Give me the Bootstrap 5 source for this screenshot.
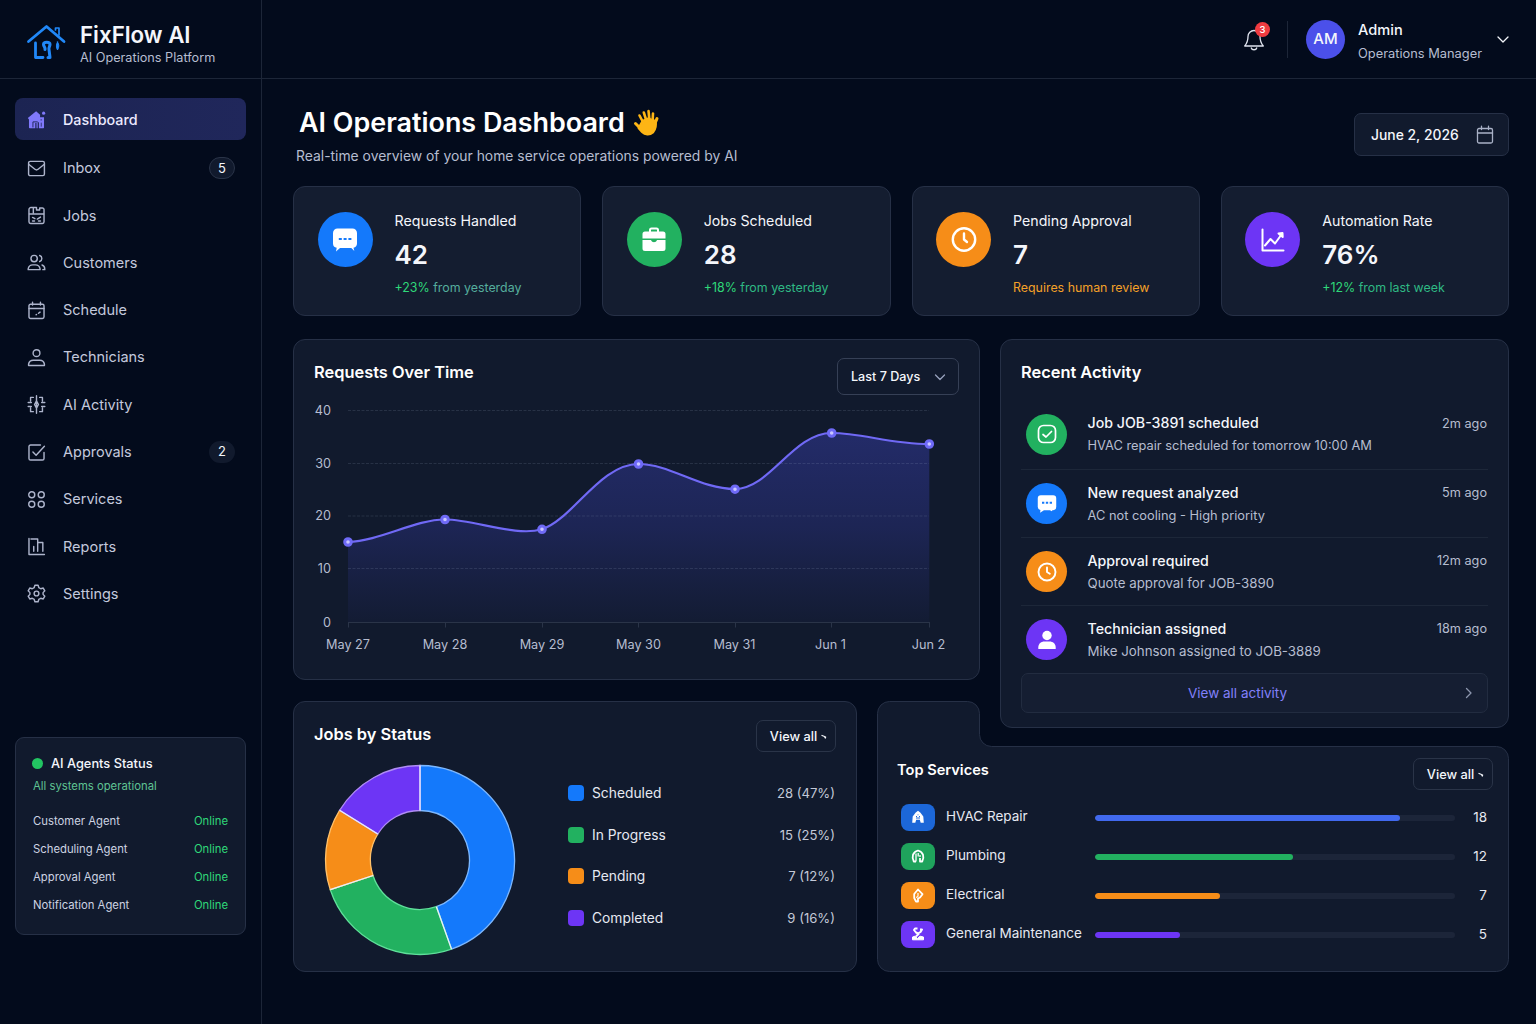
<!DOCTYPE html>
<html lang="en" data-bs-theme="dark">
  <head>
    <meta charset="UTF-8" />
    <meta name="viewport" content="width=device-width, initial-scale=1.0" />
    <title>FixFlow AI - Operations Dashboard</title>
    <link
      rel="stylesheet"
      href="https://cdn.jsdelivr.net/npm/bootstrap@5.3.0/dist/css/bootstrap.min.css"
    />
    <style>
      :root {
        --ff-bg: #030b1c;
        --ff-card: #111a2d;
        --ff-line: #263046;
        --ff-text: #f4f6fb;
        --ff-muted: #b6bdd0;
        --ff-blue: #1479fb;
        --ff-green: #22b160;
        --ff-orange: #f68d18;
        --ff-purple: #6d35f5;
      }
      body {
        background: var(--ff-bg);
        color: var(--ff-text);
        font-family: Inter, "Liberation Sans", sans-serif;
        font-size: 14px;
        line-height: 20px;
        overflow: hidden;
      }
      svg {
        display: block;
        flex-shrink: 0;
      }
      .line-icon {
        fill: none;
        stroke: currentColor;
        stroke-width: 1.8;
        stroke-linecap: round;
        stroke-linejoin: round;
      }
      .line-icon.thin {
        stroke-width: 1.3;
      }

      /* Sidebar */
      .sidebar {
        width: 262px;
        border-right: 1px solid #1d2638;
        padding-bottom: 89px;
      }
      .brand {
        height: 79px;
        border-bottom: 1px solid #1d2638;
        padding: 6px 0 0 26px;
        gap: 14px;
      }
      .brand-text {
        padding-top: 6px;
      }
      .brand-name {
        font-size: 22.3px;
        line-height: 25px;
        font-weight: 600;
      }
      .brand-sub {
        font-size: 12.7px;
        line-height: 21px;
        color: var(--ff-muted);
      }
      .side-nav {
        padding: 19px 15px 0;
        gap: 5.3px;
      }
      .side-nav .nav-link {
        height: 42px;
        padding: 1px 11px 0 12px;
        border-radius: 8px;
        color: #c3c9dc;
        font-size: 14.5px;
        gap: 17px;
      }
      .side-nav .nav-link svg {
        color: #adb4cb;
      }
      .side-nav .nav-link.active {
        background: linear-gradient(90deg, #1c2452, #20275b);
        color: #eceaff;
        font-size: 14.3px;
        font-weight: 500;
        margin-bottom: 1.5px;
      }
      .side-nav .nav-link.active svg {
        color: #8079fb;
      }
      .count-pill {
        width: 26px;
        height: 22px;
        border-radius: 11px;
        background: #111a2d;
        color: #f4f6fb;
        font-size: 13px;
        line-height: 21px;
        text-align: center;
      }
      .count-pill.outlined {
        border: 1px solid #2a3448;
        line-height: 20px;
      }
      .panel {
        background: var(--ff-card);
        border: 1px solid var(--ff-line);
        border-radius: 12px;
      }
      .agents {
        margin: 0 15px;
        height: 198px;
        padding: 16px 17px 0;
        border-radius: 9px;
        font-size: 11.3px;
      }
      .agents-title {
        font-size: 12.8px;
        font-weight: 500;
        gap: 8px;
      }
      .agents-dot {
        width: 11px;
        height: 11px;
        background: #22c562;
        margin: -1px 0 0 -1px;
      }
      .agents-note {
        color: #5fc393;
        margin: 2px 0 12px;
        line-height: 20px;
      }
      .agents li {
        line-height: 27.9px;
        color: #cdd3e2;
      }
      .agents li span:last-child {
        color: #2fd879;
      }

      /* Top bar */
      .topbar {
        height: 79px;
        border-bottom: 1px solid #1d2638;
        padding-right: 26px;
      }
      .bell {
        width: 24px;
        height: 24px;
        margin-right: 21px;
      }
      .bell svg {
        color: #dfe3ee;
      }
      .bell-count {
        position: absolute;
        top: -5px;
        left: 13px;
        width: 15px;
        height: 15px;
        border-radius: 50%;
        background: #f03b40;
        color: #fff;
        font-size: 9.5px;
        font-weight: 500;
        line-height: 15px;
        text-align: center;
      }
      .split-line {
        width: 1px;
        height: 37px;
        background: #1d2638;
        margin-right: 18px;
      }
      .avatar {
        width: 39px;
        height: 39px;
        background: #4b50ea;
        font-size: 15px;
        font-weight: 500;
        margin-right: 13px;
      }
      .who {
        width: 138px;
        line-height: 23px;
        padding-top: 5px;
      }
      .who-name {
        font-size: 14.6px;
        font-weight: 500;
      }
      .who-role {
        font-size: 12.85px;
        color: var(--ff-muted);
      }

      /* Page body */
      .content {
        padding: 0 27px 0 31px;
      }
      .page-head {
        height: 107px;
      }
      .page-title {
        font-size: 26.9px;
        line-height: 32px;
        font-weight: 600;
        margin: 27px 0 0 6px;
        gap: 8px;
      }
      .page-sub {
        margin: 8px 0 0 3px;
        font-size: 13.9px;
        color: var(--ff-muted);
      }
      .date-btn {
        margin-top: 34px;
        width: 155px;
        height: 43px;
        padding: 0 14px 0 16px;
        border-radius: 7px;
        color: var(--ff-text);
        font-size: 13.9px;
        font-weight: 500;
      }
      .date-btn svg {
        color: #a9b1c6;
      }

      .stats {
        display: grid;
        grid-template-columns: repeat(4, 288.25px);
        column-gap: 21px;
        height: 130px;
        margin-bottom: 23px;
      }
      .stat {
        background: #141d30;
        padding: 25px 0 0 23.5px;
        gap: 22px;
      }
      .stat-text {
        margin-top: -1px;
      }
      .round-icon {
        width: 55px;
        height: 55px;
        color: #fff;
        flex-shrink: 0;
      }
      .stat-label {
        font-size: 14.2px;
      }
      .stat-value {
        font-size: 26px;
        line-height: 32px;
        font-weight: 600;
        margin: 8px 0 9px;
      }
      .stat-note {
        font-size: 12.4px;
        line-height: 16px;
        color: #2fb984;
      }
      .stat-note b {
        font-weight: 400;
        color: #2fd879;
      }
      .stat-note.muted-green {
        color: #55ae9d;
      }
      .stat-note.warn {
        color: #f5a128;
      }
      .fill-blue { background: var(--ff-blue); }
      .fill-green { background: var(--ff-green); }
      .fill-orange { background: var(--ff-orange); }
      .fill-purple { background: var(--ff-purple); }

      /* Panels share one grid, Top Services wraps under Recent Activity */
      .board {
        display: grid;
        grid-template-columns: 564px 20px 103px 20px 509px;
        grid-template-rows: 341px 21px 27px 19px 225px;
      }
      .area-chart { grid-area: 1 / 1 / 2 / 4; }
      .area-activity { grid-area: 1 / 5 / 4 / 6; }
      .area-jobs { grid-area: 3 / 1 / 6 / 2; }
      .area-services { grid-area: 3 / 3 / 6 / 6; }
      .panel-title {
        font-size: 16.4px;
        line-height: 20px;
        font-weight: 600;
        margin: 0;
      }
      .ghost-btn {
        border: 1px solid #2a3448;
        border-radius: 7px;
        background: transparent;
        color: var(--ff-text);
        font-size: 12.8px;
        font-weight: 500;
        padding: 0;
      }
      .range-btn {
        width: 122px;
        height: 37px;
        padding: 0 12px 0 13px;
        border-color: #364056;
        font-size: 12.6px;
      }
      .range-btn svg { color: #97a1bc; }
      .view-btn {
        width: 80px;
        height: 32px;
        gap: 4px;
        padding: 1px 0 0 5px;
      }
      .chart-pad { padding: 18px 20px 0; }
      .axis-text {
        fill: #b6bdd0;
        font-size: 12.7px;
      }

      .activity-pad { padding: 22px 20px 0; }
      .feed { margin-top: 19px; }
      .feed li {
        height: 68px;
        padding-left: 5px;
        gap: 20.5px;
        border-bottom: 1px solid #1d2739;
      }
      .feed li:first-child {
        height: 69px;
        padding-bottom: 2px;
      }
      .feed li:last-child {
        height: 67px;
        border-bottom: 0;
      }
      .feed .round-icon {
        width: 41px;
        height: 41px;
      }
      .feed-title {
        font-size: 14.2px;
        font-weight: 500;
        line-height: 23px;
      }
      .feed-text {
        font-size: 12.85px;
        line-height: 23px;
        color: var(--ff-muted);
      }
      .feed-text.wide { font-size: 13.3px; }
      .feed-time {
        font-size: 12.7px;
        line-height: 23px;
        color: var(--ff-muted);
        padding: 11px 1px 0 0;
      }
      .all-btn {
        height: 40px;
        border-color: #222c40;
        background: #151e32;
        color: #8280fa;
        font-size: 13.5px;
        font-weight: 400;
        padding: 0 14px;
      }
      .all-btn span { margin-right: 24px; }
      .all-btn svg { color: #8b95ad; }

      .jobs-pad { padding: 18px 20px 0; }
      .donut { margin: 9px 0 0 7px; }
      .legend {
        width: 267px;
        margin: 20px 1px 0 0;
      }
      .legend li {
        height: 41.7px;
        color: #e6e9f2;
        font-size: 13.8px;
      }
      .legend li span:last-child {
        font-size: 13.1px;
        color: #c3c9d8;
      }
      .swatch {
        width: 16px;
        height: 16px;
        border-radius: 4px;
        margin-right: 8px;
      }

      .services-shape,
      .services-body { grid-area: 1 / 1; }
      .services-body { padding: 57px 16px 0 20px; }
      .services-body .panel-title {
        font-size: 14.6px;
        padding-top: 2px;
      }
      .service-list { padding: 8px 6px 0 4px; }
      .service-list li {
        height: 38.9px;
        font-size: 13.5px;
        color: #e6e9f2;
      }
      .service-chip {
        width: 34px;
        height: 27px;
        border-radius: 8px;
        margin-right: 11px;
        color: #fff;
      }
      .service-chip.hvac { background: #1c67d8; }
      .service-chip.plumbing { background: #1fa35c; }
      .service-name { width: 149px; margin-top: -2px; }
      .service-list .progress {
        width: 360px;
        height: 6px;
        border-radius: 3px;
        background: #1c2539;
        margin-top: 1px;
      }
      .service-list .progress-bar { border-radius: 3px; }
      .progress-bar.hvac { background: #4169ee; }
    </style>
  </head>
  <body>
    <div class="d-flex vh-100">
      <!-- Sidebar -->
      <aside class="sidebar d-flex flex-column flex-shrink-0">
        <div class="brand d-flex align-items-center">
          <svg width="40" height="36" viewBox="0 0 40 36" fill="none" stroke="#2188f8" stroke-width="2.800" stroke-linecap="round" stroke-linejoin="round">
            <path d="M2.500 17.500 20.500 2.500 38 17.500" />
            <path d="M29.500 6V4h3.500v7" stroke-width="1.700" />
            <path d="M9.500 19v14.500h7.500" />
            <path d="M17.500 20.500c0-3 6.500-3 6.500 0 0 2-1.500 2.500-1 5l1 8h-2M17.500 20.500c0 2 2 2.500 1.500 5" stroke-width="3" />
            <path d="M31.500 18c1.800 2 1.800 5 0 8-1.500-2.500-1.500-5.500 0-8z" fill="#2188f8" stroke-width="1" />
          </svg>
          <div class="brand-text">
            <div class="brand-name">FixFlow AI</div>
            <div class="brand-sub">AI Operations Platform</div>
          </div>
        </div>

        <nav class="side-nav nav flex-column">
          <a class="nav-link active d-flex align-items-center" href="#">
            <svg width="19" height="19" viewBox="0 0 24 24" fill="currentColor">
              <path d="M1 10 11.500 1.500l5 4.500V9h5v13a1 1 0 0 1-1 1H15v-7.500h-1.500V23H12v-6.500h-1.500V23H3.500a1 1 0 0 1-1-1V12z" />
              <path d="M7.500 22v-7h6" stroke="#20275b" stroke-width="1.200" fill="none" />
              <path d="M17 12.500h2M18 16v5" stroke="#20275b" stroke-width="1" />
              <circle cx="21" cy="4" r="2" />
            </svg>
            <span>Dashboard</span>
          </a>
          <a class="nav-link d-flex align-items-center" href="#">
            <svg class="line-icon" width="19" height="19" viewBox="0 0 24 24">
              <rect x="2" y="3" width="20" height="18" rx="2" />
              <path d="m2.500 7 7.500 6c1.300 1 2.700 1 4 0l7.500-6" />
            </svg>
            <span>Inbox</span>
            <span class="count-pill outlined ms-auto">5</span>
          </a>
          <a class="nav-link d-flex align-items-center" href="#">
            <svg class="line-icon" width="19" height="19" viewBox="0 0 24 24">
              <path d="M8 9V2H5a2.500 2.500 0 0 0-2.500 2.500v15.500a2 2 0 0 0 2 2h15a2 2 0 0 0 2-2V4.500A2 2 0 0 0 19.500 2.500H16V5h-4V2H8" />
              <path d="M3 10h18M7 14.500l3 1.500M17 14l-4 2.500M7 19h2.500M14.500 19H17" />
            </svg>
            <span>Jobs</span>
          </a>
          <a class="nav-link d-flex align-items-center" href="#">
            <svg class="line-icon" width="19" height="19" viewBox="0 0 24 24">
              <circle cx="9" cy="7" r="4" />
              <path d="M1.500 21v-1a6 6 0 0 1 6-5h3a6 6 0 0 1 6 5v1zM16 3.200a4 4 0 0 1 0 7.600M19 15.200c2.200.7 3.500 2.600 3.500 5.800H20" />
            </svg>
            <span>Customers</span>
          </a>
          <a class="nav-link d-flex align-items-center" href="#">
            <svg class="line-icon" width="19" height="19" viewBox="0 0 24 24">
              <rect x="2.500" y="4" width="19" height="18" rx="2" />
              <path d="M2.500 9.500h19M7 1.500V5M17 1.500V5M16.500 14l-2 1.500M12 17l-.5.500" />
            </svg>
            <span>Schedule</span>
          </a>
          <a class="nav-link d-flex align-items-center" href="#">
            <svg class="line-icon" width="19" height="19" viewBox="0 0 24 24">
              <circle cx="12" cy="6.500" r="4.300" />
              <path d="M2 22v-1.500A6 6 0 0 1 8 15.500h8a6 6 0 0 1 6 5V22z" />
            </svg>
            <span>Technicians</span>
          </a>
          <a class="nav-link d-flex align-items-center" href="#">
            <svg class="line-icon" width="19" height="19" viewBox="0 0 24 24">
              <path d="M12 1v22M12 7.500 9.500 12l2.500 4.500 2.500-4.500zM8 3H4.500v4.500M16 3h3.500v4.500M1.500 9.500h4M22.500 9.500h-4M1.500 14.500h4M22.500 14.500h-4M4.500 16.500V21H8M19.500 16.500V21H16" />
            </svg>
            <span>AI Activity</span>
          </a>
          <a class="nav-link d-flex align-items-center" href="#">
            <svg class="line-icon" width="19" height="19" viewBox="0 0 24 24">
              <path d="M17 2.500H4.500a2 2 0 0 0-2 2v15a2 2 0 0 0 2 2h15a2 2 0 0 0 2-2V12" />
              <path d="m7.500 11.500 4 4L22 4" />
            </svg>
            <span>Approvals</span>
            <span class="count-pill ms-auto">2</span>
          </a>
          <a class="nav-link d-flex align-items-center" href="#">
            <svg class="line-icon" width="19" height="19" viewBox="0 0 24 24">
              <circle cx="6" cy="6" r="3.800" />
              <circle cx="18" cy="6" r="3.800" />
              <circle cx="6" cy="18" r="3.800" />
              <circle cx="18" cy="18" r="3.800" />
            </svg>
            <span>Services</span>
          </a>
          <a class="nav-link d-flex align-items-center" href="#">
            <svg class="line-icon" width="19" height="19" viewBox="0 0 24 24">
              <path d="M2.500 2v20H22M5 2.500h8.500v15.500M8.500 12v6M13.500 7h6.500v11" />
            </svg>
            <span>Reports</span>
          </a>
          <a class="nav-link d-flex align-items-center" href="#">
            <svg class="line-icon" width="19" height="19" viewBox="0 0 24 24">
              <circle cx="12" cy="12" r="3" />
              <path d="M10 1.500h4l.9 3 2.500 1.500 3.100-.9 2 3.500-2.200 2.300v2.200l2.200 2.300-2 3.500-3.100-.9-2.500 1.500-.9 3h-4l-.9-3-2.500-1.500-3.100.9-2-3.500 2.200-2.300v-2.200L1.500 8.600l2-3.500 3.100.9 2.500-1.500z" />
            </svg>
            <span>Settings</span>
          </a>
        </nav>

        <div class="agents panel mt-auto">
          <div class="agents-title d-flex align-items-center">
            <span class="agents-dot rounded-circle"></span>AI Agents Status
          </div>
          <div class="agents-note">All systems operational</div>
          <ul class="list-unstyled mb-0">
            <li class="d-flex justify-content-between"><span>Customer Agent</span><span>Online</span></li>
            <li class="d-flex justify-content-between"><span>Scheduling Agent</span><span>Online</span></li>
            <li class="d-flex justify-content-between"><span>Approval Agent</span><span>Online</span></li>
            <li class="d-flex justify-content-between"><span>Notification Agent</span><span>Online</span></li>
          </ul>
        </div>
      </aside>

      <div class="flex-grow-1">
        <!-- Top bar -->
        <header class="topbar d-flex align-items-center justify-content-end">
          <div class="bell position-relative">
            <svg class="line-icon thin" width="24" height="24" viewBox="0 0 24 24">
              <path d="M12 3.500a6 6 0 0 0-6 6c0 4.500-1 6.800-3.300 9.500h18.600c-2.300-2.700-3.300-5-3.300-9.500a6 6 0 0 0-6-6z" />
              <path d="M9.300 21c.6 2.300 4.800 2.300 5.400 0" />
            </svg>
            <span class="bell-count">3</span>
          </div>
          <div class="split-line"></div>
          <div class="avatar rounded-circle d-flex align-items-center justify-content-center">AM</div>
          <div class="who">
            <div class="who-name">Admin</div>
            <div class="who-role">Operations Manager</div>
          </div>
          <svg class="line-icon thin" width="14" height="14" viewBox="0 0 14 14">
            <path d="m2 5 5 5 5-5" />
          </svg>
        </header>

        <main class="content">
          <div class="page-head d-flex justify-content-between align-items-start">
            <div>
              <h1 class="page-title d-flex align-items-center">
                AI Operations Dashboard
                <svg width="27" height="27" viewBox="0 0 27 27" fill="none" stroke="#fdb515" stroke-linecap="round">
                  <path d="M9.500 12 15 9.500l7.500 2.500c1 4 .5 8-2.500 11.500-3.500 3-8 2.500-11-.5L5.500 19z" fill="#fdb515" stroke-width="2" stroke-linejoin="round" />
                  <path d="M10.500 14 6.500 6.500M13.500 12 10.800 3.500M16.500 11.500l-1-9.500M19.500 13l.5-8.500" stroke-width="2.600" />
                  <path d="M21.500 17c.5-3 1-4.500 2.500-7.500M7.500 19.500l-5-5" stroke-width="3" />
                </svg>
              </h1>
              <p class="page-sub">Real-time overview of your home service operations powered by AI</p>
            </div>
            <button class="date-btn panel d-flex align-items-center justify-content-between" type="button">
              June 2, 2026
              <svg class="line-icon thin" width="18" height="20" viewBox="0 0 18 20">
                <rect x="1.500" y="3.500" width="15" height="14.500" rx="1.500" />
                <path d="M1.500 8h15M5.500 1.200v3.300M12.500 1.200v3.300" />
              </svg>
            </button>
          </div>

          <section class="stats">
            <div class="stat panel d-flex align-items-start">
              <div class="round-icon fill-blue rounded-circle d-flex align-items-center justify-content-center">
                <svg width="26" height="26" viewBox="0 0 26 26" fill="#fff">
                  <path d="M5.500 1.500h15a4.500 4.500 0 0 1 4.500 4.500V16.500a4.500 4.500 0 0 1-3.500 4.300l.8 3.200-3-3H8l-4 3.500.7-3.700A4.500 4.500 0 0 1 1 16.500V6a4.500 4.500 0 0 1 4.500-4.500z" />
                  <path d="M6.800 12h3M11.600 12h3M16.400 12h3" stroke="#1479fb" stroke-width="2.200" />
                </svg>
              </div>
              <div class="stat-text">
                <div class="stat-label">Requests Handled</div>
                <div class="stat-value">42</div>
                <div class="stat-note muted-green"><b>+23%</b> from yesterday</div>
              </div>
            </div>
            <div class="stat panel d-flex align-items-start">
              <div class="round-icon fill-green rounded-circle d-flex align-items-center justify-content-center">
                <svg width="26" height="26" viewBox="0 0 26 26" fill="#fff">
                  <path d="M9 5V3a1.500 1.500 0 0 1 1.500-1.500h5A1.500 1.500 0 0 1 17 3v2" fill="none" stroke="#fff" stroke-width="2" />
                  <path d="M4 4.500h18a2.500 2.500 0 0 1 2.500 2.500v4.500h-23V7A2.500 2.500 0 0 1 4 4.500zM1.500 13H10c1 3 5 3 6 0h8.500v8.500A2.500 2.500 0 0 1 22 24H4a2.500 2.500 0 0 1-2.500-2.500z" />
                </svg>
              </div>
              <div class="stat-text">
                <div class="stat-label">Jobs Scheduled</div>
                <div class="stat-value">28</div>
                <div class="stat-note"><b>+18%</b> from yesterday</div>
              </div>
            </div>
            <div class="stat panel d-flex align-items-start">
              <div class="round-icon fill-orange rounded-circle d-flex align-items-center justify-content-center">
                <svg width="26" height="26" viewBox="0 0 26 26" fill="none" stroke="#fff" stroke-width="2.400" stroke-linecap="round" stroke-linejoin="round">
                  <circle cx="13" cy="12.500" r="11.200" />
                  <path d="M13 6.500v6l3 2.500" />
                </svg>
              </div>
              <div class="stat-text">
                <div class="stat-label">Pending Approval</div>
                <div class="stat-value">7</div>
                <div class="stat-note warn">Requires human review</div>
              </div>
            </div>
            <div class="stat panel d-flex align-items-start">
              <div class="round-icon fill-purple rounded-circle d-flex align-items-center justify-content-center">
                <svg width="26" height="26" viewBox="0 0 26 26" fill="none" stroke="#fff" stroke-width="2" stroke-linecap="round" stroke-linejoin="round">
                  <path d="M2.500 2.500v21h21" />
                  <path d="m5 18.500 5.500-6.500 4.500 4.500 6.500-9" />
                  <path d="m18.500 6.500 4-.5.200 4z" fill="#fff" />
                </svg>
              </div>
              <div class="stat-text">
                <div class="stat-label">Automation Rate</div>
                <div class="stat-value">76%</div>
                <div class="stat-note"><b>+12%</b> from last week</div>
              </div>
            </div>
          </section>

          <section class="board">
            <!-- Requests over time -->
            <div class="area-chart panel chart-pad">
              <div class="d-flex justify-content-between align-items-start">
                <h2 class="panel-title mt-1">Requests Over Time</h2>
                <button class="ghost-btn range-btn d-flex align-items-center justify-content-between" type="button">
                  Last 7 Days
                  <svg class="line-icon thin" width="12" height="12" viewBox="0 0 12 12">
                    <path d="m1.500 4 4.500 4.500L10.500 4" />
                  </svg>
                </button>
              </div>
              <svg width="645" height="260" viewBox="314 395 645 260">
                <defs>
                  <linearGradient id="areaFill" x1="0" y1="433" x2="0" y2="622" gradientUnits="userSpaceOnUse">
                    <stop offset="0" stop-color="#4a50e8" stop-opacity="0.320" />
                    <stop offset="0.500" stop-color="#464ce0" stop-opacity="0.220" />
                    <stop offset="1" stop-color="#4448d0" stop-opacity="0.040" />
                  </linearGradient>
                </defs>
                <path fill="url(#areaFill)" d="M348 542C380 541 415 519.500 445 519.500S515 537 542 529.300C573 519 600 464 638.500 464C670 464 700 489 735 489C770 489 793 433 831.700 433C862 433 890 444 929.300 444V622.500H348z" />
                <g stroke="#b4bedc" stroke-opacity="0.140" stroke-dasharray="3 1.500">
                  <path d="M348 410.500h581M348 463.500h581M348 516h581M348 568.500h581" />
                </g>
                <path stroke="#2a3448" fill="none" d="M348 622.500h581M348.500 622v5.500M445.500 622v5.500M542.500 622v5.500M638.500 622v5.500M735.500 622v5.500M831.500 622v5.500M929.500 622v5.500" />
                <path fill="none" stroke="#7069f5" stroke-width="2.200" d="M348 542C380 541 415 519.500 445 519.500S515 537 542 529.300C573 519 600 464 638.500 464C670 464 700 489 735 489C770 489 793 433 831.700 433C862 433 890 444 929.300 444" />
                <g fill="#c9c6ff" stroke="#6f6af6" stroke-width="3">
                  <circle cx="348" cy="542" r="3.300" />
                  <circle cx="445" cy="519.500" r="3.300" />
                  <circle cx="542" cy="529.300" r="3.300" />
                  <circle cx="638.500" cy="464" r="3.300" />
                  <circle cx="735" cy="489.200" r="3.300" />
                  <circle cx="831.700" cy="433" r="3.300" />
                  <circle cx="929.300" cy="444" r="3.300" />
                </g>
                <g class="axis-text" text-anchor="end">
                  <text x="331" y="415">40</text>
                  <text x="331" y="467.500">30</text>
                  <text x="331" y="520">20</text>
                  <text x="331" y="573">10</text>
                  <text x="331" y="626.500">0</text>
                </g>
                <g class="axis-text" text-anchor="middle">
                  <text x="348" y="648.500">May 27</text>
                  <text x="445" y="648.500">May 28</text>
                  <text x="542" y="648.500">May 29</text>
                  <text x="638.500" y="648.500">May 30</text>
                  <text x="734.500" y="648.500">May 31</text>
                  <text x="830.500" y="648.500">Jun 1</text>
                  <text x="928.500" y="648.500">Jun 2</text>
                </g>
              </svg>
            </div>

            <!-- Recent activity -->
            <div class="area-activity panel activity-pad">
              <h2 class="panel-title">Recent Activity</h2>
              <ul class="feed list-unstyled mb-0">
                <li class="d-flex align-items-center">
                  <div class="round-icon fill-green rounded-circle d-flex align-items-center justify-content-center">
                    <svg width="20" height="20" viewBox="0 0 20 20" fill="none" stroke="#fff" stroke-width="1.700" stroke-linecap="round" stroke-linejoin="round">
                      <rect x="1.500" y="1.500" width="17" height="17" rx="5" />
                      <path d="m6 10.500 3 2.500 5.500-5.500" />
                    </svg>
                  </div>
                  <div class="flex-grow-1">
                    <div class="feed-title">Job JOB-3891 scheduled</div>
                    <div class="feed-text">HVAC repair scheduled for tomorrow 10:00 AM</div>
                  </div>
                  <div class="feed-time align-self-start">2m ago</div>
                </li>
                <li class="d-flex align-items-center">
                  <div class="round-icon fill-blue rounded-circle d-flex align-items-center justify-content-center">
                    <svg width="20" height="20" viewBox="0 0 26 26" fill="#fff">
                      <path d="M5 1.500h16a4 4 0 0 1 4 4V17a4 4 0 0 1-4 4h-1l-1 1.500L17 21H9l-5 3.500.5-3.700A4 4 0 0 1 1 17V5.500a4 4 0 0 1 4-4z" />
                      <path d="M6.500 11.500h3M11.500 11.500h3M16.500 11.500h3" stroke="#1479fb" stroke-width="2.600" />
                    </svg>
                  </div>
                  <div class="flex-grow-1">
                    <div class="feed-title">New request analyzed</div>
                    <div class="feed-text">AC not cooling - High priority</div>
                  </div>
                  <div class="feed-time align-self-start">5m ago</div>
                </li>
                <li class="d-flex align-items-center">
                  <div class="round-icon fill-orange rounded-circle d-flex align-items-center justify-content-center">
                    <svg width="20" height="20" viewBox="0 0 20 20" fill="none" stroke="#fff" stroke-width="1.900" stroke-linecap="round" stroke-linejoin="round">
                      <circle cx="10" cy="10" r="8.500" />
                      <path d="M10 5.500V10l2.800 1.800" />
                    </svg>
                  </div>
                  <div class="flex-grow-1">
                    <div class="feed-title">Approval required</div>
                    <div class="feed-text wide">Quote approval for JOB-3890</div>
                  </div>
                  <div class="feed-time align-self-start">12m ago</div>
                </li>
                <li class="d-flex align-items-center">
                  <div class="round-icon fill-purple rounded-circle d-flex align-items-center justify-content-center">
                    <svg width="20" height="20" viewBox="0 0 20 20" fill="#fff">
                      <circle cx="10" cy="5.500" r="4.700" />
                      <path d="M1.300 19v-1.500c0-4 3-6 6-6h5.400c3 0 6 2 6 6V19z" />
                    </svg>
                  </div>
                  <div class="flex-grow-1">
                    <div class="feed-title">Technician assigned</div>
                    <div class="feed-text wide">Mike Johnson assigned to JOB-3889</div>
                  </div>
                  <div class="feed-time align-self-start">18m ago</div>
                </li>
              </ul>
              <button class="ghost-btn all-btn w-100 d-flex align-items-center" type="button">
                <span class="flex-grow-1 text-center">View all activity</span>
                <svg class="line-icon thin" width="10" height="12" viewBox="0 0 10 12">
                  <path d="m3.500 1.500 4.500 4.500-4.500 4.500" />
                </svg>
              </button>
            </div>

            <!-- Jobs by status -->
            <div class="area-jobs panel jobs-pad">
              <div class="d-flex justify-content-between align-items-start">
                <h2 class="panel-title mt-1">Jobs by Status</h2>
                <button class="ghost-btn view-btn d-flex align-items-center justify-content-center" type="button">
                  View all
                  <svg class="line-icon thin" width="6" height="6" viewBox="0 0 6 6"><path d="M1 1.500l2.500 1 .8 1.500.3-1" /></svg>
                </button>
              </div>
              <div class="d-flex justify-content-between align-items-start">
                <svg class="donut" width="196" height="200" viewBox="-99 -99 196 200" stroke-width="1.300">
                  <path fill="#1479fb" stroke="#7db8ff" d="M0-94.500A94.500 94.500 0 0 1 31.500 89.100L16.400 46.700A49.500 49.500 0 0 0 0-49.500z" />
                  <path fill="#22b160" stroke="#5fe09a" d="M31.500 89.100A94.500 94.500 0 0 1-89.700 29.700L-47 15.500A49.500 49.500 0 0 0 16.400 46.700z" />
                  <path fill="#f68d18" stroke="#ffc069" d="M-89.700 29.700A94.500 94.500 0 0 1-80.400-49.700L-42.200-26A49.500 49.500 0 0 0-47 15.500z" />
                  <path fill="#6d35f5" stroke="#b08cf5" d="M-80.400-49.700A94.500 94.500 0 0 1 0-94.500V-49.500A49.500 49.500 0 0 0-42.200-26z" />
                  <path stroke="#e9eefc" fill="none" d="M0-94.500v45M31.500 89.100 16.400 46.700M-89.700 29.700-47 15.500M-80.400-49.700-42.200-26" />
                </svg>
                <ul class="legend list-unstyled mb-0">
                  <li class="d-flex align-items-center"><span class="swatch fill-blue"></span>Scheduled<span class="ms-auto">28 (47%)</span></li>
                  <li class="d-flex align-items-center"><span class="swatch fill-green"></span>In Progress<span class="ms-auto">15 (25%)</span></li>
                  <li class="d-flex align-items-center"><span class="swatch fill-orange"></span>Pending<span class="ms-auto">7 (12%)</span></li>
                  <li class="d-flex align-items-center"><span class="swatch fill-purple"></span>Completed<span class="ms-auto">9 (16%)</span></li>
                </ul>
              </div>
            </div>

            <!-- Top services -->
            <div class="area-services d-grid">
              <svg class="services-shape" width="632" height="271" viewBox="0 0 632 271">
                <path fill="#111a2d" stroke="#263046" d="M12.500.5h78a12 12 0 0 1 12 12v21a12 12 0 0 0 12 12h505a12 12 0 0 1 12 12v201a12 12 0 0 1-12 12h-607a12 12 0 0 1-12-12V12.500a12 12 0 0 1 12-12z" />
              </svg>
              <div class="services-body">
                <div class="d-flex justify-content-between align-items-start">
                  <h2 class="panel-title">Top Services</h2>
                  <button class="ghost-btn view-btn d-flex align-items-center justify-content-center" type="button">
                    View all
                    <svg class="line-icon thin" width="6" height="6" viewBox="0 0 6 6"><path d="M1 1.500l2.500 1 .8 1.500.3-1" /></svg>
                  </button>
                </div>
                <ul class="service-list list-unstyled mb-0">
                  <li class="d-flex align-items-center">
                    <span class="service-chip hvac d-flex align-items-center justify-content-center">
                      <svg width="14" height="14" viewBox="0 0 14 14" fill="#fff">
                        <path d="M7 .8 9.500 2.800 12.300 6.500 12.800 12.800H9.700L8.800 9.800H5.200L4.300 12.800H1.200L1.700 6.500 4.500 2.800z" />
                        <path d="M5 6.500h1M8 6.500h1M7 4.500v.8M5 8h4" stroke="#1c67d8" stroke-width="1.100" />
                      </svg>
                    </span>
                    <span class="service-name">HVAC Repair</span>
                    <div class="progress"><div class="progress-bar hvac" style="width: 84.7%"></div></div>
                    <span class="ms-auto">18</span>
                  </li>
                  <li class="d-flex align-items-center">
                    <span class="service-chip plumbing d-flex align-items-center justify-content-center">
                      <svg width="14" height="14" viewBox="0 0 14 14" fill="none" stroke="#fff" stroke-width="1.800" stroke-linejoin="round">
                        <path d="M5 12.500H2.800C.5 8 1.500 3 7 1.500c5.500 1.500 6.500 6.500 4.200 11H9V9" />
                        <path d="M5 4.500v8M7.200 4v3.500M9 6v2" stroke-width="1.300" />
                      </svg>
                    </span>
                    <span class="service-name">Plumbing</span>
                    <div class="progress"><div class="progress-bar fill-green" style="width: 55.1%"></div></div>
                    <span class="ms-auto">12</span>
                  </li>
                  <li class="d-flex align-items-center">
                    <span class="service-chip fill-orange d-flex align-items-center justify-content-center">
                      <svg width="12" height="15" viewBox="0 0 12 15" fill="none" stroke="#fff" stroke-width="1.800" stroke-linejoin="round">
                        <path d="M6 1.500 10.500 6.200 8 9.500l-2 1V13.500H4L2.200 10V6z" />
                        <path d="M6 5v3.500M4 9.500l2-1" stroke-width="1.200" />
                      </svg>
                    </span>
                    <span class="service-name">Electrical</span>
                    <div class="progress"><div class="progress-bar fill-orange" style="width: 34.6%"></div></div>
                    <span class="ms-auto">7</span>
                  </li>
                  <li class="d-flex align-items-center">
                    <span class="service-chip fill-purple d-flex align-items-center justify-content-center">
                      <svg width="14" height="14" viewBox="0 0 14 14" fill="none" stroke="#fff" stroke-width="2" stroke-linejoin="round">
                        <path d="M6.500 1.500H4L3 3l2 2.500L7 6.500 9.500 5l1.500-2.500H9M8 6.500 5 9.500" />
                        <path d="M1.500 12.800V10l2.500-.8 2.500 2.300L9 9.200l3.500.8v2.800z" fill="#fff" stroke-width="1" />
                      </svg>
                    </span>
                    <span class="service-name">General Maintenance</span>
                    <div class="progress"><div class="progress-bar fill-purple" style="width: 23.6%"></div></div>
                    <span class="ms-auto">5</span>
                  </li>
                </ul>
              </div>
            </div>
          </section>
        </main>
      </div>
    </div>
    <script src="https://cdn.jsdelivr.net/npm/bootstrap@5.3.0/dist/js/bootstrap.bundle.min.js"></script>
  </body>
</html>
